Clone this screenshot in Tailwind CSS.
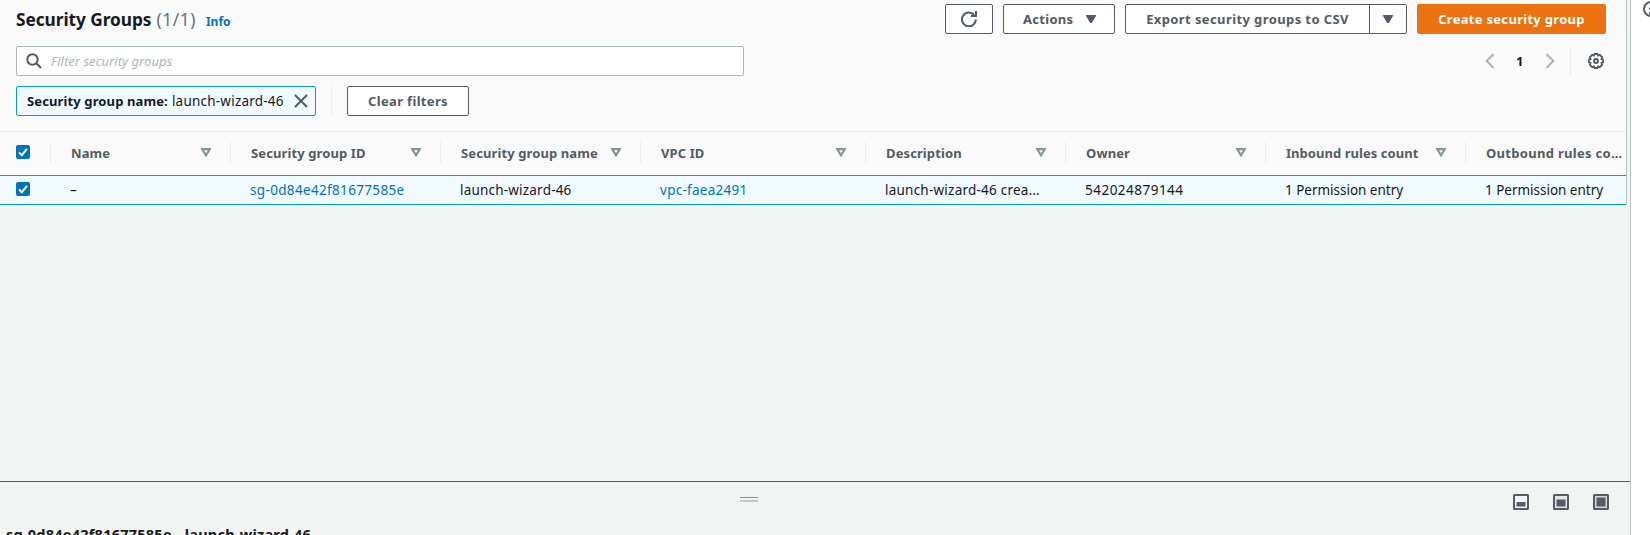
<!DOCTYPE html>
<html lang="en">
<head>
<meta charset="utf-8">
<title>Security Groups</title>
<script src="https://cdn.jsdelivr.net/npm/@tailwindcss/browser@4"></script>
</head>
<body class="flex h-[535px] w-[1650px] overflow-hidden bg-white font-['Noto_Sans','Open_Sans',sans-serif] text-[13px] leading-[20px] text-[#16191f]">
<svg class="hidden">
  <symbol id="sort" viewBox="0 0 10 9"><path d="M1.3 1.200h7.4L5 7.300z" fill="none" stroke="#879596" stroke-width="2.200"/></symbol>
  <symbol id="check" viewBox="0 0 14 14"><rect width="14" height="14" rx="2" fill="#0073bb"/><path d="M3 7.4 5.8 10.2 11 3.8" fill="none" stroke="#fff" stroke-width="2"/></symbol>
</svg>
<main class="flex w-[1631px] flex-col border-r border-[#bcc3c4] bg-[#f2f3f3]">
  <section class="flex h-[205px] w-[1627px] flex-col border-r border-[#bcc3c4] bg-[#fafafa]">
    <header class="flex h-[34px] pl-4 pr-5 pt-1">
      <h1 class="mt-[2px] flex h-7 items-center whitespace-nowrap text-[17.3px] font-bold tracking-[-0.06px]"><span>Security Groups</span><span class="ml-[5px] font-normal tracking-[0.6px] text-[#687078]">(1/1)</span></h1>
      <a class="ml-[10px] mt-[8px] text-[12px] font-bold text-[#0073bb]">Info</a>
      <div class="ml-auto flex gap-[10px] font-bold tracking-[0.3px] text-[#545b64]">
        <button class="flex h-[30px] w-12 items-center justify-center rounded-[2px] border border-[#545b64] bg-white">
          <svg class="size-4" viewBox="0 0 16 16" fill="none" stroke="#545b64" stroke-width="2"><path d="M14.8 8.500A6.900 6.900 0 1 1 13.200 4"/><path d="M15 0v5H10"/></svg>
        </button>
        <button class="flex h-[30px] w-[112px] items-center rounded-[2px] border border-[#545b64] bg-white pl-[19px]"><span>Actions</span><svg class="ml-auto mr-[18px] h-2 w-[10px]" viewBox="0 0 10 8"><path d="M0 0h10v1L5.8 8H4.2L0 1z" fill="#545b64"/></svg></button>
        <div class="flex h-[30px] w-[282px] rounded-[2px] border border-[#545b64] bg-white">
          <button class="w-[244px] whitespace-nowrap border-r border-[#545b64] tracking-[0.4px]">Export security groups to CSV</button>
          <button class="flex flex-1 items-center justify-center"><svg class="h-2 w-[10px]" viewBox="0 0 10 8"><path d="M0 0h10v1L5.8 8H4.2L0 1z" fill="#545b64"/></svg></button>
        </div>
        <button class="h-[30px] w-[189px] whitespace-nowrap rounded-[2px] bg-[#ec7211] text-white">Create security group</button>
      </div>
    </header>
    <div class="mt-3 flex h-[30px] pl-4 pr-5">
      <div class="flex w-[728px] items-center rounded-[2px] border border-[#aab7b8] bg-white pl-[9px]">
        <svg class="size-4" viewBox="0 0 16 16" fill="none" stroke="#545b64" stroke-width="2"><circle cx="6.5" cy="6.5" r="5.2"/><path d="m10.3 10.3 4.7 4.7"/></svg>
        <span class="ml-[9px] italic tracking-[0.03px] text-[#aab7b8]">Filter security groups</span>
      </div>
      <div class="ml-auto flex items-center">
        <svg class="h-4 w-[10px]" viewBox="0 0 10 16" fill="none" stroke="#aab7b8" stroke-width="2"><path d="M8.6 1 1.6 8l7 7"/></svg>
        <span class="ml-[21px] w-[8px] font-bold">1</span>
        <svg class="ml-[21px] h-4 w-[10px]" viewBox="0 0 10 16" fill="none" stroke="#aab7b8" stroke-width="2"><path d="m1.4 1 7 7-7 7"/></svg>
        <span class="ml-[15px] h-[30px] w-px bg-[#eaeded]"></span>
        <svg class="ml-[17px] mr-[2px] size-4" viewBox="0 0 16 16" fill="none" stroke="#545b64" stroke-width="1.9"><path d="M6.600 1h2.800l.7 1.500 1.700-.6 2.300 2.300-.6 1.700 1.500.7v2.800l-1.500.7.6 1.700-2.300 2.300-1.700-.6-.7 1.500H6.600l-.7-1.500-1.700.6-2.300-2.300.6-1.700L1 9.400V6.600l1.500-.7-.6-1.700 2.300-2.300 1.700.6z"/><circle cx="8" cy="8" r="2"/></svg>
      </div>
    </div>
    <div class="mt-[10px] flex h-[30px] pl-4">
      <div class="flex w-[300px] items-center whitespace-nowrap rounded-[2px] border border-[#00a1c9] bg-[#f1faff] pl-[10px]"><span class="font-bold tracking-[0.12px]">Security group name:</span><span class="ml-1 text-[13.5px] tracking-[0.22px]">launch-wizard-46</span>
        <svg class="ml-auto mr-[7px] size-[14px]" viewBox="0 0 14 14" stroke="#545b64" stroke-width="2"><path d="m1 1 12 12M13 1 1 13"/></svg>
      </div>
      <span class="ml-[15px] w-px bg-[#eaeded]"></span>
      <button class="ml-[15px] w-[122px] rounded-[2px] border border-[#545b64] bg-white font-bold tracking-[0.34px] text-[#545b64]">Clear filters</button>
    </div>
    <div class="mt-[15px] flex h-[44px] border-t border-[#eaeded] pt-[10px] font-bold tracking-[0.11px] text-[#545b64] *:h-[21px] *:shrink-0 *:whitespace-nowrap *:border-r *:border-[#eaeded]">
      <div class="w-[51px] pl-4"><svg class="mt-[3px] size-[14px]"><use href="#check"/></svg></div>
      <div class="flex w-[180px] items-center pl-5 pr-[19px]"><span>Name</span><svg class="ml-auto h-[9px] w-[10px]"><use href="#sort"/></svg></div>
      <div class="flex w-[210px] items-center pl-5 pr-[19px]"><span>Security group ID</span><svg class="ml-auto h-[9px] w-[10px]"><use href="#sort"/></svg></div>
      <div class="flex w-[200px] items-center pl-5 pr-[19px]"><span>Security group name</span><svg class="ml-auto h-[9px] w-[10px]"><use href="#sort"/></svg></div>
      <div class="flex w-[225px] items-center pl-5 pr-[19px]"><span>VPC ID</span><svg class="ml-auto h-[9px] w-[10px]"><use href="#sort"/></svg></div>
      <div class="flex w-[200px] items-center pl-5 pr-[19px]"><span>Description</span><svg class="ml-auto h-[9px] w-[10px]"><use href="#sort"/></svg></div>
      <div class="flex w-[200px] items-center pl-5 pr-[19px]"><span>Owner</span><svg class="ml-auto h-[9px] w-[10px]"><use href="#sort"/></svg></div>
      <div class="flex w-[200px] items-center pl-5 pr-[19px]"><span class="tracking-[0.05px]">Inbound rules count</span><svg class="ml-auto h-[9px] w-[10px]"><use href="#sort"/></svg></div>
      <div class="flex w-[160px] items-center border-r-0! pl-5 tracking-[0.3px]"><span>Outbound rules co…</span></div>
    </div>
    <div class="flex h-[30px] border-y border-[#00a1c9] bg-[#f1faff] pt-1 text-[13.5px] *:shrink-0 *:whitespace-nowrap">
      <div class="w-[70px] pl-4"><svg class="mt-[2px] size-[14px]"><use href="#check"/></svg></div>
      <div class="w-[180px]">–</div>
      <div class="w-[210px] tracking-[0.34px] text-[#0073bb]">sg-0d84e42f81677585e</div>
      <div class="w-[200px] tracking-[0.2px]">launch-wizard-46</div>
      <div class="w-[225px] tracking-[0.27px] text-[#0073bb]">vpc-faea2491</div>
      <div class="w-[200px] tracking-[0.23px]">launch-wizard-46 crea…</div>
      <div class="w-[200px] tracking-[0.49px]">542024879144</div>
      <div class="w-[200px] tracking-[-0.02px]">1 Permission entry</div>
      <div class="w-[140px] tracking-[-0.02px]">1 Permission entry</div>
    </div>
  </section>
  <section class="mt-[276px] h-[54px] overflow-hidden border-t border-[#545b64]">
    <div class="flex h-[42px] items-start pl-[740px] pt-[12px]">
      <div class="mt-[3px] flex w-[18px] flex-col gap-[2px]"><span class="h-px bg-[#879596]"></span><span class="h-[2px] bg-[#c4c8c8]"></span></div>
      <div class="ml-auto mr-[21px] flex gap-6">
        <svg class="size-4" viewBox="0 0 16 16"><rect x="1" y="1" width="14" height="14" rx=".5" fill="#f2f3f3" stroke="#545b64" stroke-width="2"/><path d="M3.500 8h9v4.500h-9z" fill="#545b64"/></svg>
        <svg class="size-4" viewBox="0 0 16 16"><rect x="1" y="1" width="14" height="14" rx=".5" fill="#e4e6e7" stroke="#545b64" stroke-width="2"/><path d="M3.500 5.500h9v7h-9z" fill="#545b64"/></svg>
        <svg class="size-4" viewBox="0 0 16 16"><rect x="1" y="1" width="14" height="14" rx=".5" fill="#d5d8da" stroke="#545b64" stroke-width="2"/><path d="M3.500 3.500h9v9h-9z" fill="#545b64"/></svg>
      </div>
    </div>
    <h2 class="whitespace-nowrap pl-[6px] text-[14.5px] font-bold tracking-[0.24px]">sg-0d84e42f81677585e - launch-wizard-46</h2>
  </section>
</main>
<aside class="w-[19px] overflow-hidden pl-3 pt-px">
  <svg class="h-4 w-4 max-w-none" viewBox="0 0 16 16" fill="none" stroke="#545b64" stroke-width="2"><circle cx="8" cy="8" r="7"/><path d="M7 7h1.500v5M6 12h3M6 7.500h2M7 4.500h2"/></svg>
</aside>
</body>
</html>
